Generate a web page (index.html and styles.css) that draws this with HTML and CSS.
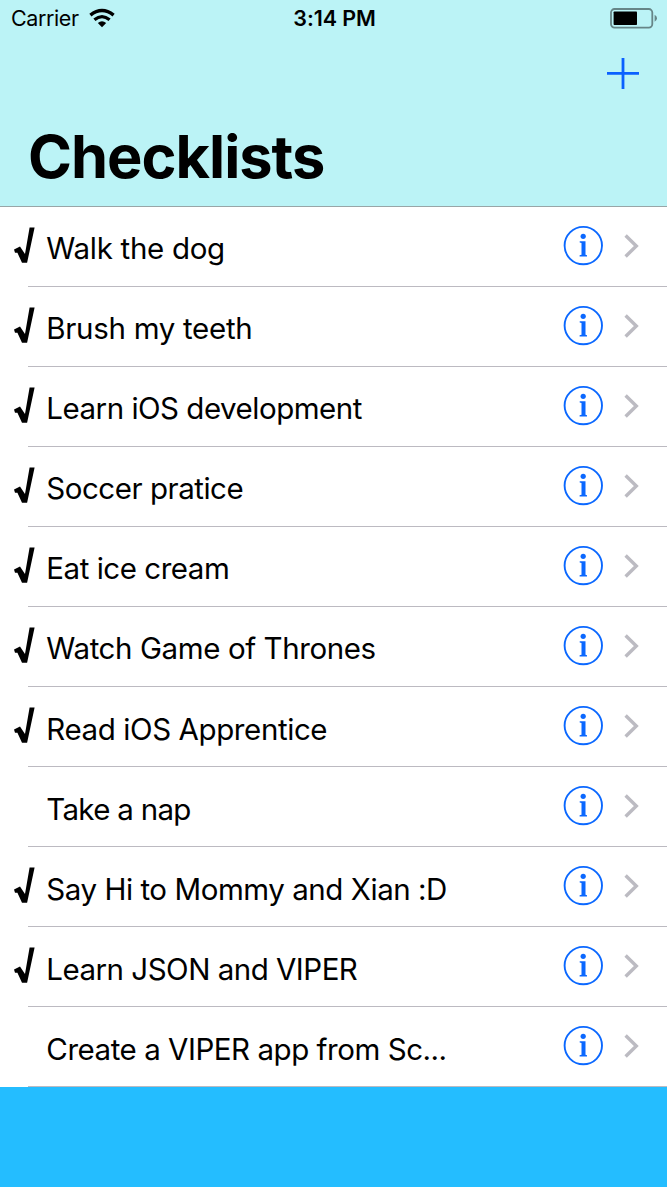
FILE: index.html
```html
<!DOCTYPE html>
<html lang="en">
<head>
<meta charset="utf-8">
<title>Checklists</title>
<link rel="stylesheet" href="styles.css">
</head>
<body>
<svg class="defs" width="0" height="0" aria-hidden="true">
  <symbol id="check" viewBox="0 0 22 36"><path d="M0 21.4 6 18.6 11 26 15.6-.6H20.6L13.1 34.8H8L3.4 24.8 1 24.8Z"/></symbol>
  <symbol id="info" viewBox="0 0 40 40"><circle cx="20.3" cy="19.6" r="18.7" fill="none" stroke="currentColor" stroke-width="1.9"/><circle cx="20.2" cy="10.3" r="2.6"/><path d="M16.7 15.3H22.5V28.8L24 29.3V30.5H16.6V29.3L18.5 28.8V17L16.7 16.6Z"/></symbol>
  <symbol id="chevron" viewBox="0 0 16 24"><path d="M1.6 1.5 12.3 12 1.6 22.5" fill="none" stroke="currentColor" stroke-width="3.4"/></symbol>
</svg>
<header class="header">
  <div class="status">
    <div class="carrier"><span>Carrier</span>
      <svg class="wifi" viewBox="0 0 26 19"><g fill="none" stroke="#000"><path d="M1.4 6.1Q13-3.1 24.6 6.1" stroke-width="3.4"/><path d="M5.4 10.7Q13 4.5 20.6 10.7" stroke-width="3.2"/></g><path d="M8.8 14Q13 10.6 17.2 14L13 18.3Z"/></svg>
    </div>
    <div class="time">3:14 PM</div>
    <svg class="battery" viewBox="0 0 48 21"><rect x="1" y="1" width="41.3" height="18.6" rx="3.5" fill="none" stroke="#668587" stroke-width="1.8"/><rect x="3.6" y="3.4" width="23.4" height="13.6" rx=".8"/><path d="M44.6 6.8Q47 8 47 10.3T44.6 13.8Z" fill="#668587"/></svg>
  </div>
  <div class="toolbar"><svg class="plus" viewBox="0 0 32 32"><path d="M16 0V31M0 15.4H32" stroke="#0a60ff" stroke-width="2.8"/></svg></div>
  <h1 class="title">Checklists</h1>
</header>
<main class="list">
  <div class="row"><svg class="check"><use href="#check"/></svg><span class="label walk">Walk the dog</span><svg class="info"><use href="#info"/></svg><svg class="chevron"><use href="#chevron"/></svg></div>
  <div class="row"><svg class="check"><use href="#check"/></svg><span class="label brush">Brush my teeth</span><svg class="info"><use href="#info"/></svg><svg class="chevron"><use href="#chevron"/></svg></div>
  <div class="row"><svg class="check"><use href="#check"/></svg><span class="label learn">Learn iOS development</span><svg class="info"><use href="#info"/></svg><svg class="chevron"><use href="#chevron"/></svg></div>
  <div class="row"><svg class="check"><use href="#check"/></svg><span class="label soccer">Soccer pratice</span><svg class="info"><use href="#info"/></svg><svg class="chevron"><use href="#chevron"/></svg></div>
  <div class="row"><svg class="check"><use href="#check"/></svg><span class="label eat">Eat ice cream</span><svg class="info"><use href="#info"/></svg><svg class="chevron"><use href="#chevron"/></svg></div>
  <div class="row"><svg class="check"><use href="#check"/></svg><span class="label watch">Watch Game of Thrones</span><svg class="info"><use href="#info"/></svg><svg class="chevron"><use href="#chevron"/></svg></div>
  <div class="row"><svg class="check"><use href="#check"/></svg><span class="label read">Read iOS Apprentice</span><svg class="info"><use href="#info"/></svg><svg class="chevron"><use href="#chevron"/></svg></div>
  <div class="row"><span class="check"></span><span class="label nap">Take a nap</span><svg class="info"><use href="#info"/></svg><svg class="chevron"><use href="#chevron"/></svg></div>
  <div class="row"><svg class="check"><use href="#check"/></svg><span class="label say">Say Hi to Mommy and Xian :D</span><svg class="info"><use href="#info"/></svg><svg class="chevron"><use href="#chevron"/></svg></div>
  <div class="row"><svg class="check"><use href="#check"/></svg><span class="label json">Learn JSON and VIPER</span><svg class="info"><use href="#info"/></svg><svg class="chevron"><use href="#chevron"/></svg></div>
  <div class="row"><span class="check"></span><span class="label create">Create a VIPER app from Sc...</span><svg class="info"><use href="#info"/></svg><svg class="chevron"><use href="#chevron"/></svg></div>
</main>
</body>
</html>
```
FILE: styles.css
```css
* { box-sizing: border-box; }
body { margin: 0; height: 1187px; overflow: hidden; background: #24bdff; color: #000; font-family: Inter, "Liberation Sans", sans-serif; }
.defs { display: block; width: 0; height: 0; }
svg { display: block; flex: none; fill: currentColor; overflow: visible; }
symbol { overflow: visible; }
.header { height: 207px; background: #bbf3f6; border-bottom: 1px solid #98a5a7; }
.status { display: grid; grid-template-columns: 1fr auto 1fr; height: 37px; padding: 0 9px 0 11px; align-items: center; font-size: 21.5px; line-height: 37px; }
.carrier { display: flex; gap: 10.5px; align-items: center; letter-spacing: -.4px; }
.wifi { width: 26px; height: 19px; }
.time { font-weight: 600; letter-spacing: -.1px; }
.battery { width: 48px; height: 21px; justify-self: end; }
.toolbar { display: flex; justify-content: flex-end; height: 73px; padding: 21px 28px 0 0; }
.plus { width: 32px; height: 32px; }
.title { margin: 0; padding: 10px 0 0 28px; font-size: 59.5px; line-height: 73px; font-weight: 700; letter-spacing: -1px; }
.row { display: flex; align-items: center; height: 80px; padding: 0 27px 3px 14px; background: linear-gradient(#bcbac1, #bcbac1) 28px 79px / 100% 1px no-repeat #fff; }
.row:nth-child(n+7) { padding-bottom: 2px; }
.check { width: 22px; height: 36px; flex: none; }
.label { flex: 1; margin-left: 10.3px; padding-top: 5px; font-size: 29.5px; line-height: 36px; white-space: nowrap; letter-spacing: -.3px; }
.learn { letter-spacing: -.49px; }
.soccer, .eat { letter-spacing: -.47px; }
.watch { letter-spacing: -.4px; }
.read { letter-spacing: -.4px; }
.nap { letter-spacing: -.7px; }
.say { letter-spacing: -.45px; }
.json { letter-spacing: -.5px; }
.create { letter-spacing: -.46px; }
.info { width: 40px; height: 40px; color: #0b68ff; margin-right: 21px; }
.chevron { width: 16px; height: 24px; color: #bcbbc2; }
```
